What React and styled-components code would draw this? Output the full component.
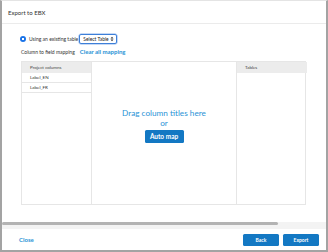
import React from 'react'
import styled, { createGlobalStyle } from 'styled-components'

const Global = createGlobalStyle`
  html, body { margin: 0; padding: 0; background: #fff; }
  body { font-family: Lato, "Open Sans", sans-serif; }
  * { box-sizing: border-box; }
`

const blue = '#1378c3'
const linkBlue = '#2a93d6'

export default function App() {
  return (
    <>
      <Global />
      <Frame>
        <Header>Export to EBX</Header>
        <Body>
          <OptionRow>
            <Radio />
            <OptionLabel>Using an existing table</OptionLabel>
            <Select>
              <span>Select Table</span>
              <svg width="4" height="6" viewBox="0 0 4 6">
                <path d="M0.5 2.4 L2 0.8 L3.5 2.4 Z M0.5 3.6 L2 5.2 L3.5 3.6 Z" fill="#333" />
              </svg>
            </Select>
          </OptionRow>
          <MappingRow>
            <MappingLabel>Column to field mapping</MappingLabel>
            <LinkText>Clear all mapping</LinkText>
          </MappingRow>
          <Panels>
            <Column>
              <ColumnHead>Project columns</ColumnHead>
              <ColumnItem>Label_EN</ColumnItem>
              <ColumnItem>Label_FR</ColumnItem>
            </Column>
            <DropZone>
              <DropText>Drag column titles here</DropText>
              <DropText>or</DropText>
              <Button $small>Auto map</Button>
            </DropZone>
            <Column>
              <ColumnHead>Tables</ColumnHead>
            </Column>
          </Panels>
        </Body>
        <ScrollTrack>
          <ScrollThumb />
        </ScrollTrack>
        <Footer>
          <LinkText $footer>Close</LinkText>
          <FooterButtons>
            <Button>Back</Button>
            <Button>Export</Button>
          </FooterButtons>
        </Footer>
      </Frame>
    </>
  )
}

const Frame = styled.div`
  width: 328px;
  height: 252px;
  display: flex;
  flex-direction: column;
  border-top: 1px solid #e4e4e4;
  border-left: 2px solid #a3a3a3;
  border-right: 2px solid #a3a3a3;
  border-bottom: 2px solid #a3a3a3;
  background: #fff;
  overflow: hidden;
`

const Header = styled.div`
  height: 23px;
  flex: none;
  display: flex;
  align-items: center;
  padding-left: 6px;
  font-size: 6px;
  color: #333;
  border-bottom: 1px solid #ebebeb;
`

const Body = styled.div`
  flex: 1;
  padding: 9px 0 0 19px;
  display: flex;
  flex-direction: column;
`

const OptionRow = styled.div`
  height: 11px;
  display: flex;
  align-items: center;
`

const Radio = styled.span`
  width: 6px;
  height: 6px;
  margin-left: -1px;
  border-radius: 50%;
  background: radial-gradient(circle, #fff 0 1.1px, #1a73e8 1.4px);
`

const OptionLabel = styled.span`
  margin-left: 3px;
  font-size: 5px;
  color: #333;
`

const Select = styled.div`
  margin-left: 1px;
  width: 38px;
  height: 10px;
  border: 1px solid #3d7fd9;
  box-shadow: 0 0 0 0.5px #8db4ec;
  border-radius: 2px;
  display: flex;
  align-items: center;
  justify-content: space-between;
  padding: 0 2px 0 3px;
  font-size: 4.9px;
  color: #222;
  white-space: nowrap;
`

const MappingRow = styled.div`
  margin-top: 2px;
  height: 11px;
  display: flex;
  align-items: center;
  gap: 5px;
`

const MappingLabel = styled.span`
  font-size: 5px;
  color: #333;
`

const LinkText = styled.span`
  font-size: 6px;
  font-weight: 700;
  color: ${linkBlue};
`

const Panels = styled.div`
  margin-top: 4px;
  width: 285px;
  height: 144px;
  display: grid;
  grid-template-columns: 70px 145px 70px;
  border: 1px solid #e6e6e6;
`

const Column = styled.div`
  display: flex;
  flex-direction: column;
  border-right: 1px solid #e6e6e6;
  &:last-child { border-right: none; }
`

const ColumnHead = styled.div`
  height: 11px;
  display: flex;
  align-items: center;
  padding-left: 8px;
  background: #ececec;
  font-size: 4.5px;
  color: #444;
`

const ColumnItem = styled.div`
  height: 10px;
  display: flex;
  align-items: center;
  padding-left: 8px;
  border-bottom: 1px solid #e6e6e6;
  font-size: 4.5px;
  color: #333;
`

const DropZone = styled.div`
  border-right: 1px solid #e6e6e6;
  display: flex;
  flex-direction: column;
  align-items: center;
  padding-top: 46px;
`

const DropText = styled.div`
  font-size: 8.2px;
  line-height: 10px;
  color: ${linkBlue};
`

const Button = styled.button`
  border: none;
  border-radius: 1.5px;
  background: ${blue};
  color: #fff;
  font-family: inherit;
  font-weight: 700;
  padding: 0;
  width: ${(p) => (p.$small ? '39px' : '36px')};
  height: ${(p) => (p.$small ? '13px' : '12px')};
  margin-top: ${(p) => (p.$small ? '2px' : '0')};
  font-size: ${(p) => (p.$small ? '6.5px' : '5px')};
`

const ScrollTrack = styled.div`
  flex: none;
  height: 7px;
  background: #f3f3f3;
`

const ScrollThumb = styled.div`
  width: 276px;
  height: 3px;
  border-radius: 2px;
  background: #b3b3b3;
`

const Footer = styled.div`
  flex: none;
  height: 21px;
  display: flex;
  align-items: center;
  justify-content: space-between;
  padding: 0 7px 0 17px;
`

const FooterButtons = styled.div`
  display: flex;
  gap: 4px;
`
